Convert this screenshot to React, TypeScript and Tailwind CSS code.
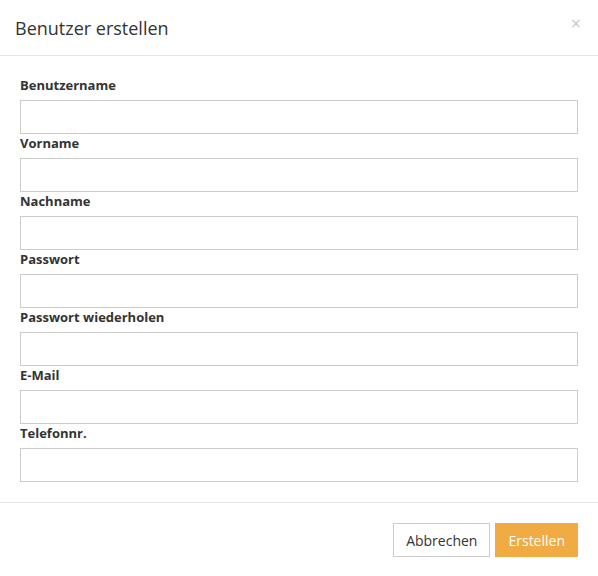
import React from 'react';

const fields = [
  'Benutzername',
  'Vorname',
  'Nachname',
  'Passwort',
  'Passwort wiederholen',
  'E-Mail',
  'Telefonnr.',
];

export default function App() {
  return (
    <div className="w-[598px] h-[576px] bg-white text-[#333] font-['Open_Sans',sans-serif]">
      {/* Header */}
      <div className="h-[56px] px-[15px] flex items-center justify-between border-b border-[#e5e5e5]">
        <h4 className="text-[18px] font-normal leading-[26px] text-[#333]">Benutzer erstellen</h4>
        <button className="text-[#c8c8c8] text-[18px] leading-none -mt-[10px] mr-[2px]">×</button>
      </div>

      {/* Body */}
      <div className="px-[20px] pt-[20px] pb-[20px] border-b border-[#e5e5e5]">
        {fields.map((f) => (
          <div key={f}>
            <label className="block text-[13px] font-bold leading-[18px] mb-[6px]">{f}</label>
            <input
              type={f.startsWith('Passwort') ? 'password' : 'text'}
              className="block w-full h-[34px] border border-[#ccc] bg-white outline-none"
            />
          </div>
        ))}
      </div>

      {/* Footer */}
      <div className="px-[20px] pt-[20px] flex justify-end gap-[5px]">
        <button className="h-[34px] px-[12px] border border-[#ccc] bg-white text-[14px] text-[#333]">
          Abbrechen
        </button>
        <button className="h-[34px] px-[12px] border border-[#f0ab43] bg-[#f0ab43] text-[14px] text-white">
          Erstellen
        </button>
      </div>
    </div>
  );
}
